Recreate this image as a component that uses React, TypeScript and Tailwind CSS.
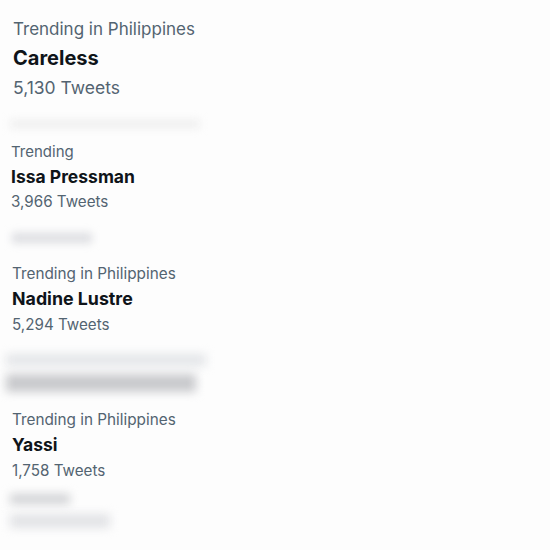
import React from "react";

const font = { fontFamily: 'Inter, "Liberation Sans", sans-serif' };

function Item({
  label,
  name,
  count,
  cls,
}: {
  label: string;
  name: string;
  count: string;
  cls: { wrap: string; label: string; name: string; count: string };
}) {
  return (
    <div className={cls.wrap}>
      <div className={cls.label}>{label}</div>
      <div className={cls.name}>{name}</div>
      <div className={cls.count}>{count}</div>
    </div>
  );
}

export default function App() {
  return (
    <div
      className="w-[550px] h-[550px] bg-[#fdfdfd] overflow-hidden flex flex-col"
      style={font}
    >
      <Item
        label="Trending in Philippines"
        name="Careless"
        count="5,130 Tweets"
        cls={{
          wrap: "pl-[13px] pt-[16px] flex flex-col h-[108px]",
          label: "text-[17px] leading-[27px] text-[#536471]",
          name: "text-[20px] leading-[30px] font-bold text-[#0f1419]",
          count: "text-[17.5px] leading-[29px] text-[#536471]",
        }}
      />
      <div className="h-[32px] px-[10px] flex items-center">
        <div className="h-[8px] w-[190px] bg-[#eeeeee] blur-[4px]" />
      </div>
      <Item
        label="Trending"
        name="Issa Pressman"
        count="3,966 Tweets"
        cls={{
          wrap: "pl-[11px] flex flex-col h-[93px]",
          label: "text-[15px] leading-[24px] text-[#536471]",
          name: "text-[17.5px] leading-[26px] font-bold text-[#0f1419]",
          count: "text-[15.2px] leading-[24px] text-[#536471]",
        }}
      />
      <div className="h-[29px] px-[12px] flex items-start">
        <div className="h-[10px] w-[80px] bg-[#dcdde1] blur-[4px]" />
      </div>
      <Item
        label="Trending in Philippines"
        name="Nadine Lustre"
        count="5,294 Tweets"
        cls={{
          wrap: "pl-[12px] flex flex-col h-[86px]",
          label: "text-[15.3px] leading-[24px] text-[#536471]",
          name: "text-[17.8px] leading-[26px] font-bold text-[#0f1419]",
          count: "text-[15.2px] leading-[26px] text-[#536471]",
        }}
      />
      <div className="h-[60px] px-[6px] flex flex-col gap-[8px] pt-[6px]">
        <div className="h-[12px] w-[200px] bg-[#e3e5e8] blur-[5px]" />
        <div className="h-[18px] w-[190px] bg-[#c9cacd] blur-[5px]" />
      </div>
      <Item
        label="Trending in Philippines"
        name="Yassi"
        count="1,758 Tweets"
        cls={{
          wrap: "pl-[12px] flex flex-col h-[86px]",
          label: "text-[15.3px] leading-[24px] text-[#536471]",
          name: "text-[17.5px] leading-[26px] font-bold text-[#0f1419]",
          count: "text-[15.2px] leading-[26px] text-[#536471]",
        }}
      />
      <div className="px-[10px] flex flex-col gap-[10px]">
        <div className="h-[10px] w-[60px] bg-[#d0d1d4] blur-[5px]" />
        <div className="h-[14px] w-[100px] bg-[#e2e3e6] blur-[5px]" />
      </div>
    </div>
  );
}
